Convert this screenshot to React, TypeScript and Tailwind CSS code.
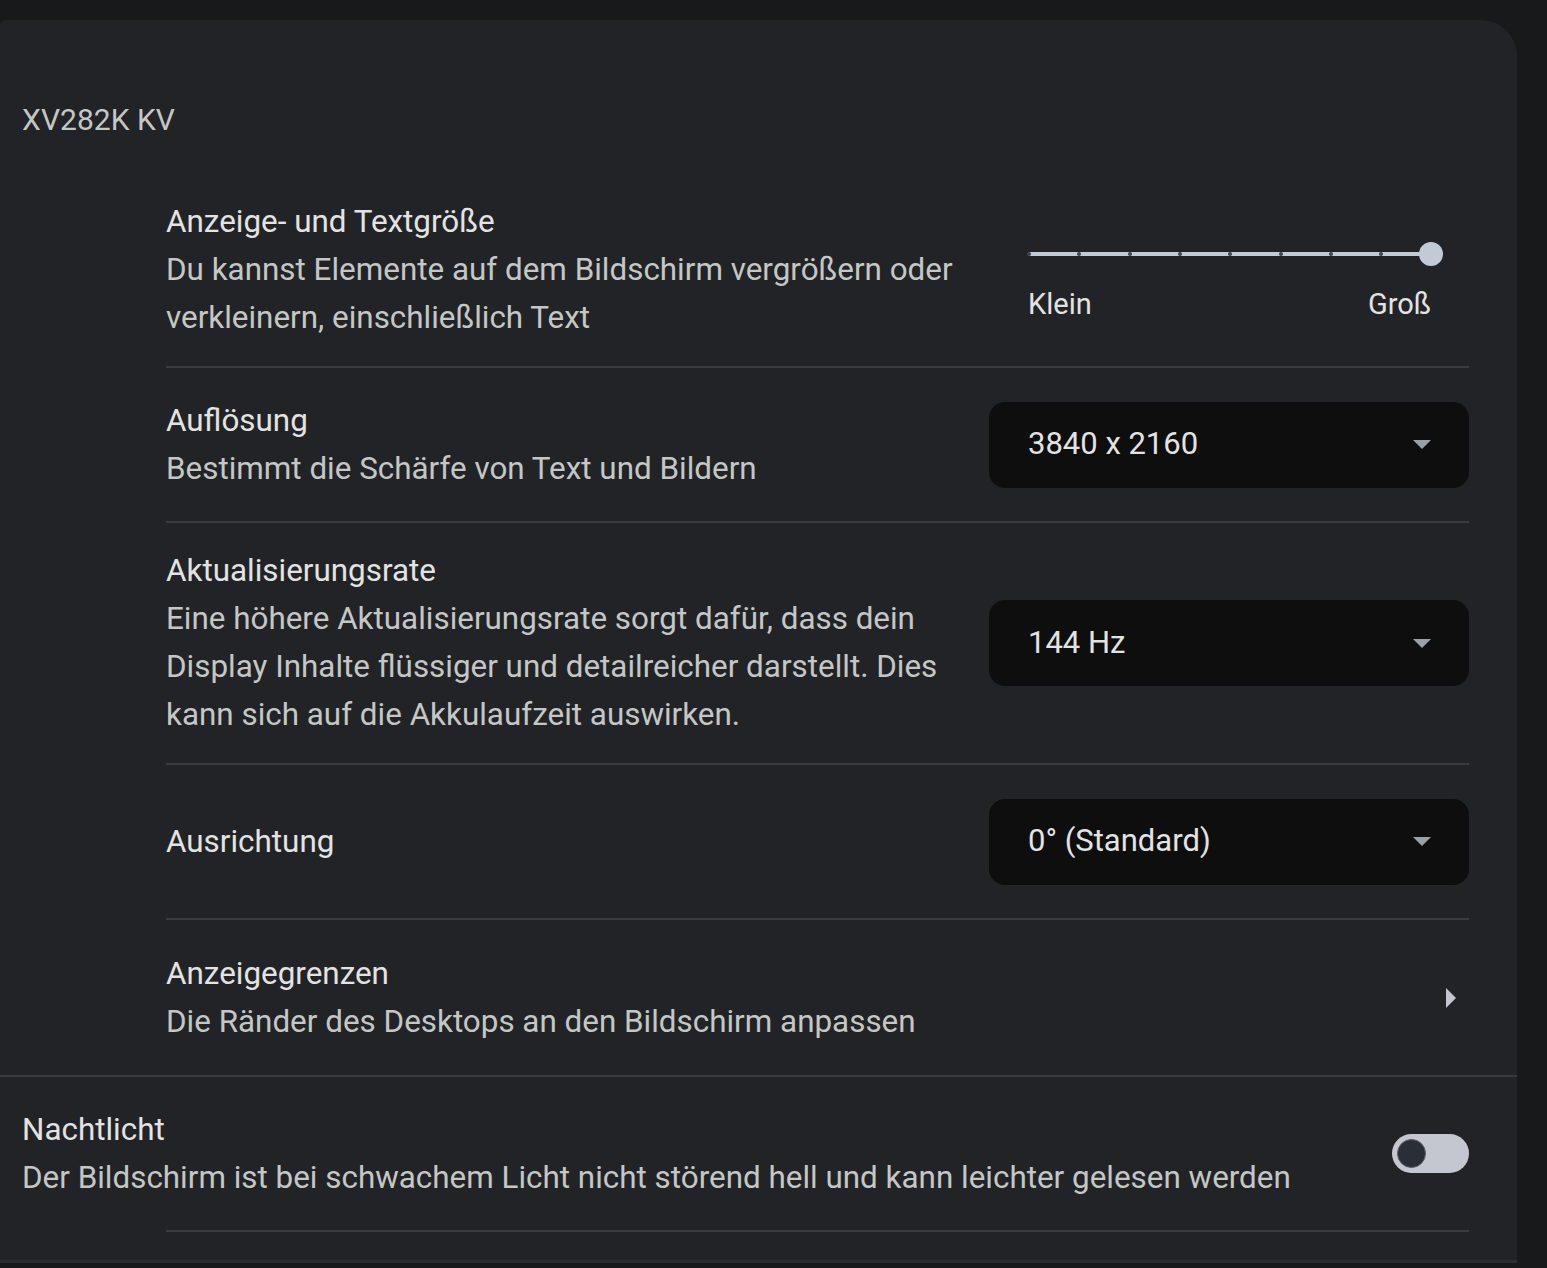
const font = { fontFamily: 'Roboto, "Noto Sans", sans-serif' };

function Select({ value }: { value: string }) {
    return (
        <div className="flex h-[86px] w-[480px] shrink-0 items-center justify-between rounded-[16px] bg-[#0e0e0f] pl-[39px] pr-[38px] text-[31px] text-[#e3e3e3]">
            <span>{value}</span>
            <svg width="18" height="9" viewBox="0 0 18 9">
                <path d="M0 0 L18 0 L9 9 Z" fill="#9aa0a6" />
            </svg>
        </div>
    );
}

function Slider() {
    const ticks = [0, 1, 2, 3, 4, 5, 6, 7];
    return (
        <div className="w-[480px] shrink-0 pl-[39px] pr-[38px] pt-[21px]">
            <div className="relative h-[26px] w-[403px]">
                <div className="absolute left-0 right-0 top-[11px] h-[4px] rounded-full bg-[#c2cad6]" />
                {ticks.map((t) => (
                    <div
                        key={t}
                        className="absolute top-[11px] h-[4px] w-[4px] rounded-full bg-[#3c4350]"
                        style={{ left: t * 50.3 - 1 }}
                    />
                ))}
                <div className="absolute right-[-12px] top-[1px] h-[24px] w-[24px] rounded-full bg-[#c2cad6]" />
            </div>
            <div className="mt-[20px] flex w-[403px] justify-between text-[29px] leading-[34px] text-[#e3e3e3]">
                <span>Klein</span>
                <span>Groß</span>
            </div>
        </div>
    );
}

function Row({
    title,
    desc,
    children,
    last,
}: {
    title: string;
    desc?: string[];
    children?: React.ReactNode;
    last?: boolean;
}) {
    return (
        <div className={`flex min-h-[155px] items-center justify-between py-[24px] ${last ? '' : 'border-b-2 border-[#3a3b3d]'}`}>
            <div className="leading-[48px]">
                <div className="text-[31.4px] text-[#e3e3e3]">{title}</div>
                {desc && desc.map((d) => (
                    <div key={d} className="text-[31.4px] text-[#c4c7c5]">{d}</div>
                ))}
            </div>
            {children}
        </div>
    );
}

export default function App() {
    return (
        <div className="h-[1268px] w-[1547px] overflow-hidden bg-[#18191b] pt-[20px]" style={font}>
            <div className="flex w-[1517px] flex-col rounded-tl-[6px] rounded-tr-[36px] bg-[#222326]">
                <div className="h-[154px] pl-[22px] pt-[76px] text-[30px] leading-[48px] text-[#c4c7c5]">XV282K KV</div>

                <div className="ml-[166px] mr-[48px]">
                    <Row
                        title="Anzeige- und Textgröße"
                        desc={['Du kannst Elemente auf dem Bildschirm vergrößern oder', 'verkleinern, einschließlich Text']}
                    >
                        <Slider />
                    </Row>
                    <Row title="Auflösung" desc={['Bestimmt die Schärfe von Text und Bildern']}>
                        <Select value="3840 x 2160" />
                    </Row>
                    <Row
                        title="Aktualisierungsrate"
                        desc={[
                            'Eine höhere Aktualisierungsrate sorgt dafür, dass dein',
                            'Display Inhalte flüssiger und detailreicher darstellt. Dies',
                            'kann sich auf die Akkulaufzeit auswirken.',
                        ]}
                    >
                        <Select value="144 Hz" />
                    </Row>
                    <Row title="Ausrichtung">
                        <Select value="0° (Standard)" />
                    </Row>
                    <Row title="Anzeigegrenzen" desc={['Die Ränder des Desktops an den Bildschirm anpassen']} last>
                        <svg width="10" height="20" viewBox="0 0 10 20" className="mr-[13px]">
                            <path d="M0 0 L10 10 L0 20 Z" fill="#c4c7d0" />
                        </svg>
                    </Row>
                </div>

                <div className="border-t-2 border-[#38393b]">
                    <div className="flex min-h-[153px] items-center justify-between pl-[22px] pr-[48px] leading-[48px]">
                        <div>
                            <div className="text-[31.4px] text-[#e3e3e3]">Nachtlicht</div>
                            <div className="text-[31.4px] text-[#c4c7c5]">
                                Der Bildschirm ist bei schwachem Licht nicht störend hell und kann leichter gelesen werden
                            </div>
                        </div>
                        <div className="flex h-[39px] w-[77px] items-center rounded-full bg-[#c4c7cf] pl-[5px]">
                            <div className="h-[29px] w-[29px] rounded-full border border-[#5a5f6a] bg-[#2a2e37]" />
                        </div>
                    </div>
                    <div className="ml-[166px] mr-[48px] h-[2px] bg-[#3a3b3d]" />
                    <div className="h-[28px]" />
                </div>
            </div>
            <div className="h-[3px] w-[1517px] bg-[#2b2d2f]" />
        </div>
    );
}
